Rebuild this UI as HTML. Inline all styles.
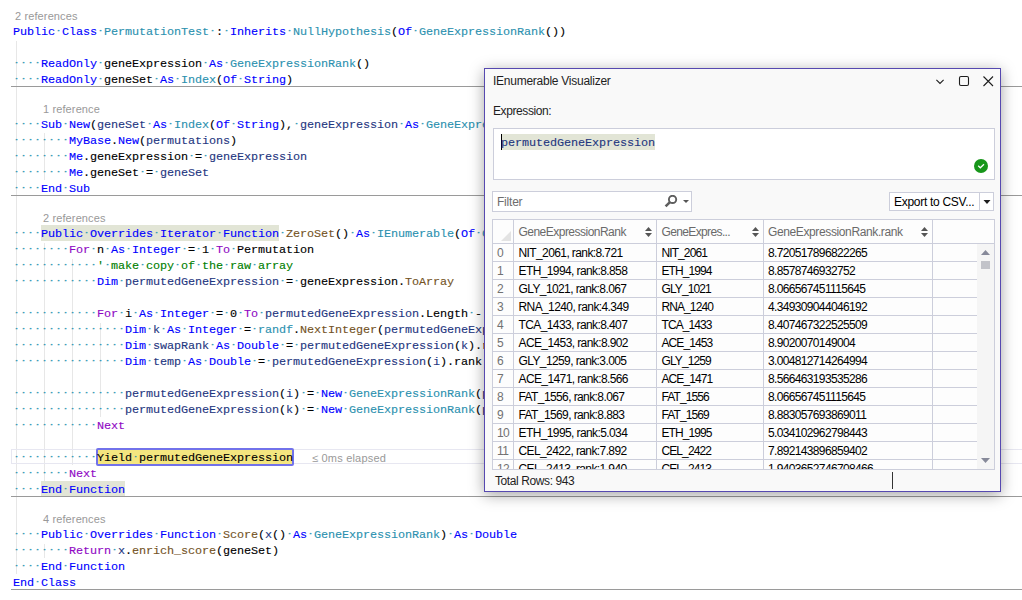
<!DOCTYPE html>
<html><head><meta charset="utf-8"><title>IEnumerable Visualizer</title>
<style>
html,body{margin:0;padding:0}
body{width:1022px;height:600px;background:#fff;overflow:hidden;position:relative;font-family:"Liberation Sans",sans-serif}
i{font-style:normal}
.ed{position:absolute;left:0;top:0;width:1022px;height:600px;overflow:hidden}
.ln{position:absolute;left:13px;height:16px;line-height:16px;margin-top:1px;white-space:pre;font-family:"Liberation Mono",monospace;font-size:11.8px;letter-spacing:-0.0812px;color:#000;-webkit-text-stroke:0.12px}
.ln i.w{color:#2b91af;font-size:9px;letter-spacing:1.5991px;position:relative;left:0.5px;top:-2.2px;-webkit-text-stroke:0;text-shadow:0.7px 0 0 rgba(43,145,175,.75)}
.k{color:#0000ff}.c{color:#8f08c4}.t{color:#2b91af}.l{color:#1f377f}.m{color:#74531f}.g{color:#008000}
.hl{position:absolute;height:16px;background:#e2e5d6}
.cl{position:absolute;letter-spacing:0.12px;font-size:11px;line-height:13px;height:13px;color:#999;white-space:pre}
.gd{position:absolute;width:1px;background:#e7e7e7}
.sp{position:absolute;left:11px;right:0;height:1px;background:#9a9a9a}
.cur{position:absolute;left:11px;top:449px;width:1020px;height:13px;border:1px solid #e7e7f1}
.yb{position:absolute;left:96px;top:448px;width:194px;height:14px;border:2px solid #7272ea;border-radius:2px;background:#f4e67f}
.el{position:absolute;letter-spacing:0.2px;left:312px;top:452px;font-size:11px;line-height:13px;color:#999;white-space:pre}
/* dialog */
.dlg{position:absolute;left:484px;top:68px;width:515px;height:422px;border:1px solid #5649b0;background:#f9f9f9;box-shadow:0 3px 14px rgba(0,0,0,.36);font-size:12px;color:#1e1e1e}
.dlg .a{position:absolute;white-space:pre;line-height:16px}
.box{position:absolute;border:1px solid #cccedb;background:#fff;box-sizing:border-box}
.row{position:absolute;left:0;width:484px;height:18px;border-bottom:1px solid #cccedb;box-sizing:border-box;line-height:18px;color:#000;white-space:pre}
.row span{position:absolute;top:0}
.row{font-size:12px}.c0{left:4px;color:#717171;letter-spacing:-0.6px}.c1{left:25.5px;letter-spacing:-0.60px}.c2{left:168.5px;letter-spacing:-0.91px}.c3{left:275px;letter-spacing:-0.65px}
.vl{position:absolute;top:0;width:1px;height:250px;background:#cccedb}
.hd{position:absolute;top:1px;line-height:23px;color:#6a6a6a;white-space:pre}
</style></head><body>
<div class="ed">
<!-- guides -->
<div class="gd" style="left:16px;top:41px;height:533px"></div>
<div class="gd" style="left:44px;top:133px;height:47px"></div>
<div class="gd" style="left:44px;top:243px;height:238px"></div>
<div class="gd" style="left:44px;top:544px;height:14px"></div>
<div class="gd" style="left:72px;top:259px;height:206px"></div>
<div class="gd" style="left:100px;top:323px;height:94px"></div>
<div class="hl" style="left:41px;top:225px;width:238px"></div>
<div class="hl" style="left:41px;top:481px;width:84px"></div>
<div class="cur"></div>
<div class="yb"></div>
<!-- codelens -->
<div class="cl" style="left:15px;top:10px">2 references</div>
<div class="cl" style="left:43px;top:103px">1 reference</div>
<div class="cl" style="left:43px;top:212px">2 references</div>
<div class="cl" style="left:43px;top:513px">4 references</div>
<div class="el">≤ 0ms elapsed</div>
<div class="ln" style="top:23px"><i class="k">Public</i><i class="w">·</i><i class="k">Class</i><i class="w">·</i><i class="t">PermutationTest</i><i class="w">·</i><i>:</i><i class="w">·</i><i class="k">Inherits</i><i class="w">·</i><i class="t">NullHypothesis</i><i>(</i><i class="k">Of</i><i class="w">·</i><i class="t">GeneExpressionRank</i><i>())</i></div>
<div class="ln" style="top:55px"><i class="w">····</i><i class="k">ReadOnly</i><i class="w">·</i><i>geneExpression</i><i class="w">·</i><i class="k">As</i><i class="w">·</i><i class="t">GeneExpressionRank</i><i>()</i></div>
<div class="ln" style="top:71px"><i class="w">····</i><i class="k">ReadOnly</i><i class="w">·</i><i>geneSet</i><i class="w">·</i><i class="k">As</i><i class="w">·</i><i class="t">Index</i><i>(</i><i class="k">Of</i><i class="w">·</i><i class="k">String</i><i>)</i></div>
<div class="ln" style="top:116px"><i class="w">····</i><i class="k">Sub</i><i class="w">·</i><i class="k">New</i><i>(</i><i class="l">geneSet</i><i class="w">·</i><i class="k">As</i><i class="w">·</i><i class="t">Index</i><i>(</i><i class="k">Of</i><i class="w">·</i><i class="k">String</i><i>),</i><i class="w">·</i><i class="l">geneExpression</i><i class="w">·</i><i class="k">As</i><i class="w">·</i><i class="t">GeneExpressionRank</i><i>(),</i><i class="w">·</i><i class="l">permutations</i><i class="w">·</i><i class="k">As</i><i class="w">·</i><i class="k">Integer</i><i>)</i></div>
<div class="ln" style="top:132px"><i class="w">········</i><i class="k">MyBase</i><i>.</i><i class="k">New</i><i>(</i><i class="l">permutations</i><i>)</i></div>
<div class="ln" style="top:148px"><i class="w">········</i><i class="k">Me</i><i>.geneExpression</i><i class="w">·</i><i>=</i><i class="w">·</i><i class="l">geneExpression</i></div>
<div class="ln" style="top:164px"><i class="w">········</i><i class="k">Me</i><i>.geneSet</i><i class="w">·</i><i>=</i><i class="w">·</i><i class="l">geneSet</i></div>
<div class="ln" style="top:180px"><i class="w">····</i><i class="k">End</i><i class="w">·</i><i class="k">Sub</i></div>
<div class="ln" style="top:225px"><i class="w">····</i><i class="k">Public</i><i class="w">·</i><i class="k">Overrides</i><i class="w">·</i><i class="k">Iterator</i><i class="w">·</i><i class="k">Function</i><i class="w">·</i><i class="m">ZeroSet</i><i>()</i><i class="w">·</i><i class="k">As</i><i class="w">·</i><i class="t">IEnumerable</i><i>(</i><i class="k">Of</i><i class="w">·</i><i class="t">GeneExpressionRank</i><i>())</i></div>
<div class="ln" style="top:241px"><i class="w">········</i><i class="c">For</i><i class="w">·</i><i>n</i><i class="w">·</i><i class="k">As</i><i class="w">·</i><i class="k">Integer</i><i class="w">·</i><i>=</i><i class="w">·</i><i>1</i><i class="w">·</i><i class="c">To</i><i class="w">·</i><i>Permutation</i></div>
<div class="ln" style="top:257px"><i class="w">············</i><i class="g">&#x27;</i><i class="w">·</i><i class="g">make</i><i class="w">·</i><i class="g">copy</i><i class="w">·</i><i class="g">of</i><i class="w">·</i><i class="g">the</i><i class="w">·</i><i class="g">raw</i><i class="w">·</i><i class="g">array</i></div>
<div class="ln" style="top:273px"><i class="w">············</i><i class="k">Dim</i><i class="w">·</i><i class="l">permutedGeneExpression</i><i class="w">·</i><i>=</i><i class="w">·</i><i>geneExpression.</i><i class="m">ToArray</i></div>
<div class="ln" style="top:305px"><i class="w">············</i><i class="c">For</i><i class="w">·</i><i>i</i><i class="w">·</i><i class="k">As</i><i class="w">·</i><i class="k">Integer</i><i class="w">·</i><i>=</i><i class="w">·</i><i>0</i><i class="w">·</i><i class="c">To</i><i class="w">·</i><i class="l">permutedGeneExpression</i><i>.Length</i><i class="w">·</i><i>-</i><i class="w">·</i><i>1</i></div>
<div class="ln" style="top:321px"><i class="w">················</i><i class="k">Dim</i><i class="w">·</i><i class="l">k</i><i class="w">·</i><i class="k">As</i><i class="w">·</i><i class="k">Integer</i><i class="w">·</i><i>=</i><i class="w">·</i><i class="t">randf</i><i>.</i><i class="m">NextInteger</i><i>(</i><i class="l">permutedGeneExpression</i><i>.Length)</i></div>
<div class="ln" style="top:337px"><i class="w">················</i><i class="k">Dim</i><i class="w">·</i><i class="l">swapRank</i><i class="w">·</i><i class="k">As</i><i class="w">·</i><i class="k">Double</i><i class="w">·</i><i>=</i><i class="w">·</i><i class="l">permutedGeneExpression</i><i>(</i><i class="l">k</i><i>).rank</i></div>
<div class="ln" style="top:353px"><i class="w">················</i><i class="k">Dim</i><i class="w">·</i><i class="l">temp</i><i class="w">·</i><i class="k">As</i><i class="w">·</i><i class="k">Double</i><i class="w">·</i><i>=</i><i class="w">·</i><i class="l">permutedGeneExpression</i><i>(</i><i class="l">i</i><i>).rank</i></div>
<div class="ln" style="top:385px"><i class="w">················</i><i class="l">permutedGeneExpression</i><i>(</i><i class="l">i</i><i>)</i><i class="w">·</i><i>=</i><i class="w">·</i><i class="k">New</i><i class="w">·</i><i class="t">GeneExpressionRank</i><i>(</i><i class="l">permutedGeneExpression</i><i>(i).geneID,</i><i class="w">·</i><i>swapRank)</i></div>
<div class="ln" style="top:401px"><i class="w">················</i><i class="l">permutedGeneExpression</i><i>(</i><i class="l">k</i><i>)</i><i class="w">·</i><i>=</i><i class="w">·</i><i class="k">New</i><i class="w">·</i><i class="t">GeneExpressionRank</i><i>(</i><i class="l">permutedGeneExpression</i><i>(k).geneID,</i><i class="w">·</i><i>temp)</i></div>
<div class="ln" style="top:417px"><i class="w">············</i><i class="c">Next</i></div>
<div class="ln" style="top:449px"><i class="w">············</i><i>Yield</i><i class="w">·</i><i>permutedGeneExpression</i></div>
<div class="ln" style="top:465px"><i class="w">········</i><i class="c">Next</i></div>
<div class="ln" style="top:481px"><i class="w">····</i><i class="k">End</i><i class="w">·</i><i class="k">Function</i></div>
<div class="ln" style="top:526px"><i class="w">····</i><i class="k">Public</i><i class="w">·</i><i class="k">Overrides</i><i class="w">·</i><i class="k">Function</i><i class="w">·</i><i class="m">Score</i><i>(</i><i class="l">x</i><i>()</i><i class="w">·</i><i class="k">As</i><i class="w">·</i><i class="t">GeneExpressionRank</i><i>)</i><i class="w">·</i><i class="k">As</i><i class="w">·</i><i class="k">Double</i></div>
<div class="ln" style="top:542px"><i class="w">········</i><i class="c">Return</i><i class="w">·</i><i class="l">x</i><i>.</i><i class="m">enrich_score</i><i>(geneSet)</i></div>
<div class="ln" style="top:558px"><i class="w">····</i><i class="k">End</i><i class="w">·</i><i class="k">Function</i></div>
<div class="ln" style="top:574px"><i class="k">End</i><i class="w">·</i><i class="k">Class</i></div>
<div class="sp" style="top:86px"></div>
<div class="sp" style="top:195px"></div>
<div class="sp" style="top:496px"></div>
<div class="sp" style="top:589px"></div>
</div>

<div class="dlg">
 <div class="a" style="left:8px;top:4px;letter-spacing:-0.254px">IEnumerable Visualizer</div>
 <svg style="position:absolute;left:447px;top:4px" width="64" height="18" viewBox="0 0 64 18" fill="none" stroke="#1e1e1e" stroke-width="1.1">
  <path d="M4.4 6.9 L8 10.5 L11.6 6.9"/>
  <rect x="27.5" y="3.5" width="9" height="9" rx="1.5"/>
  <path d="M51.5 3.5 L61 13 M61 3.5 L51.5 13"/>
 </svg>
 <div class="a" style="left:8px;top:34px;letter-spacing:-0.41px">Expression:</div>
 <div class="box" style="left:8px;top:59px;width:502px;height:52px">
   <div style="position:absolute;left:7px;top:5px;width:154px;height:16px;background:#e2e5d6"></div>
   <div style="position:absolute;left:7px;top:5px;width:1px;height:16px;background:#000"></div>
   <div class="a" style="left:7px;top:6px;font-family:'Liberation Mono',monospace;font-size:11.8px;letter-spacing:-0.0812px;color:#1f377f;-webkit-text-stroke:0.12px">permutedGeneExpression</div>
   <svg style="position:absolute;left:480px;top:30px" width="14" height="14" viewBox="0 0 14 14"><circle cx="7" cy="7" r="7" fill="#17961a"/><path d="M4.2 6.8 L6.3 8.8 L10 5.2" fill="none" stroke="#fff" stroke-width="1.2"/></svg>
 </div>
 <div class="box" style="left:7px;top:122px;width:200px;height:21px">
   <div class="a" style="left:4px;top:2px;color:#6d6d6d;letter-spacing:-0.21px">Filter</div>
   <svg style="position:absolute;left:170px;top:3px" width="28" height="14" viewBox="0 0 28 14"><circle cx="9.55" cy="4.4" r="3.65" fill="none" stroke="#5e5e5e" stroke-width="1.9"/><path d="M7.2 6.8 L2.6 11.4" stroke="#5e5e5e" stroke-width="2.5"/><path d="M20 5 h6 l-3 3 z" fill="#555"/></svg>
 </div>
 <div class="box" style="left:404px;top:123px;width:105px;height:19px">
   <div class="a" style="left:4px;top:1px;color:#000;letter-spacing:-0.29px">Export to CSV...</div>
   <div style="position:absolute;left:89px;top:0;width:1px;height:17px;background:#cccedb"></div>
   <svg style="position:absolute;left:93px;top:7px" width="8" height="5" viewBox="0 0 8 5"><path d="M0.5 0 h7 l-3.5 4 z" fill="#1e1e1e"/></svg>
 </div>
 <!-- grid -->
 <div class="box" style="left:7px;top:150px;width:503px;height:251px;overflow:hidden;background:#fdfdfd">
   <div style="position:absolute;left:0;top:0;width:501px;height:23px;border-bottom:1px solid #cccedb"></div>
   <div class="vl" style="left:20px"></div><div class="vl" style="left:163px"></div><div class="vl" style="left:270px"></div><div class="vl" style="left:439px"></div>
   <svg style="position:absolute;left:8px;top:11px" width="10" height="10"><path d="M10 0 V10 H0 z" fill="#e3e3e3"/></svg>
   <div class="hd" style="left:25.5px;letter-spacing:-0.52px">GeneExpressionRank</div>
   <div class="hd" style="left:168.5px;letter-spacing:-0.63px">GeneExpres...</div>
   <div class="hd" style="left:275px;letter-spacing:-0.38px">GeneExpressionRank.rank</div>
   <svg class="so" style="position:absolute;left:152px;top:7px" width="7" height="10"><path d="M0 4 L3.5 0 L7 4z M0 6 L3.5 10 L7 6z" fill="#555"/></svg>
   <svg class="so" style="position:absolute;left:259px;top:7px" width="7" height="10"><path d="M0 4 L3.5 0 L7 4z M0 6 L3.5 10 L7 6z" fill="#555"/></svg>
   <svg class="so" style="position:absolute;left:428px;top:7px" width="7" height="10"><path d="M0 4 L3.5 0 L7 4z M0 6 L3.5 10 L7 6z" fill="#555"/></svg>
<div class="row" style="top:24px"><span class="c0">0</span><span class="c1">NIT_2061, rank:8.721</span><span class="c2">NIT_2061</span><span class="c3">8.720517896822265</span></div>
<div class="row" style="top:42px"><span class="c0">1</span><span class="c1">ETH_1994, rank:8.858</span><span class="c2">ETH_1994</span><span class="c3">8.8578746932752</span></div>
<div class="row" style="top:60px"><span class="c0">2</span><span class="c1">GLY_1021, rank:8.067</span><span class="c2">GLY_1021</span><span class="c3">8.066567451115645</span></div>
<div class="row" style="top:78px"><span class="c0">3</span><span class="c1">RNA_1240, rank:4.349</span><span class="c2">RNA_1240</span><span class="c3">4.349309044046192</span></div>
<div class="row" style="top:96px"><span class="c0">4</span><span class="c1">TCA_1433, rank:8.407</span><span class="c2">TCA_1433</span><span class="c3">8.407467322525509</span></div>
<div class="row" style="top:114px"><span class="c0">5</span><span class="c1">ACE_1453, rank:8.902</span><span class="c2">ACE_1453</span><span class="c3">8.9020070149004</span></div>
<div class="row" style="top:132px"><span class="c0">6</span><span class="c1">GLY_1259, rank:3.005</span><span class="c2">GLY_1259</span><span class="c3">3.004812714264994</span></div>
<div class="row" style="top:150px"><span class="c0">7</span><span class="c1">ACE_1471, rank:8.566</span><span class="c2">ACE_1471</span><span class="c3">8.566463193535286</span></div>
<div class="row" style="top:168px"><span class="c0">8</span><span class="c1">FAT_1556, rank:8.067</span><span class="c2">FAT_1556</span><span class="c3">8.066567451115645</span></div>
<div class="row" style="top:186px"><span class="c0">9</span><span class="c1">FAT_1569, rank:8.883</span><span class="c2">FAT_1569</span><span class="c3">8.883057693869011</span></div>
<div class="row" style="top:204px"><span class="c0">10</span><span class="c1">ETH_1995, rank:5.034</span><span class="c2">ETH_1995</span><span class="c3">5.034102962798443</span></div>
<div class="row" style="top:222px"><span class="c0">11</span><span class="c1">CEL_2422, rank:7.892</span><span class="c2">CEL_2422</span><span class="c3">7.892143896859402</span></div>
<div class="row" style="top:240px"><span class="c0">12</span><span class="c1">CEL_2413, rank:1.940</span><span class="c2">CEL_2413</span><span class="c3">1.9403652746708466</span></div>
   <div style="position:absolute;left:484px;top:24px;width:17px;height:226px;background:#f5f5f5">
     <svg style="position:absolute;left:4px;top:6px" width="9" height="5"><path d="M0 5 L4.5 0 L9 5z" fill="#868999"/></svg>
     <div style="position:absolute;left:4px;top:17px;width:9px;height:8px;background:#c2c3c9"></div>
     <svg style="position:absolute;left:4px;top:214px" width="9" height="5"><path d="M0 0 L4.5 5 L9 0z" fill="#868999"/></svg>
   </div>
 </div>
 <div class="a" style="left:10px;top:404px;letter-spacing:-0.40px">Total Rows: 943</div>
 <div style="position:absolute;left:407px;top:403px;width:1px;height:17px;background:#333"></div>
</div>
</body></html>
